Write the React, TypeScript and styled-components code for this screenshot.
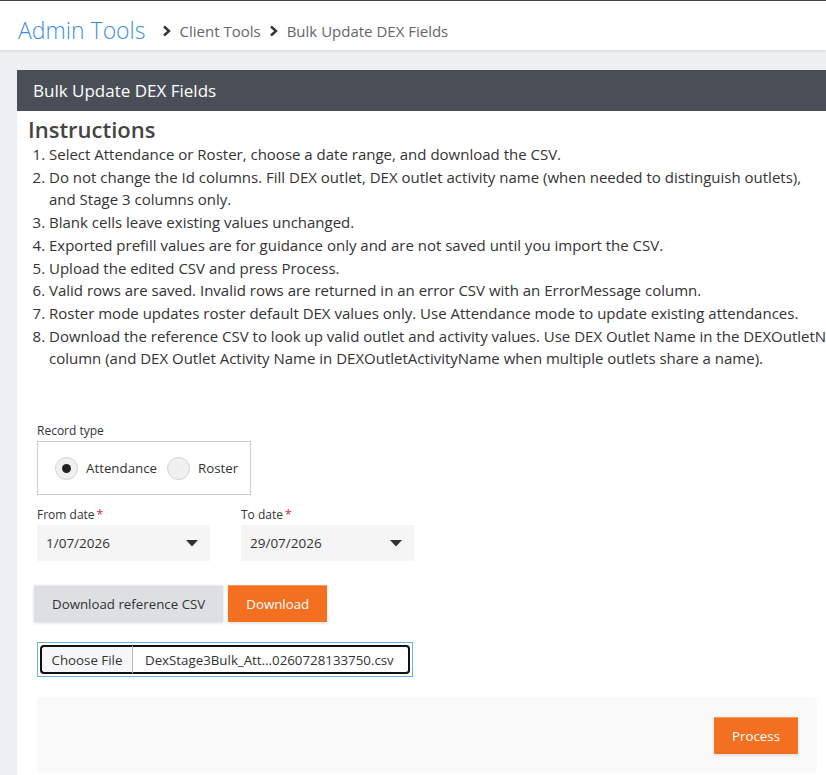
import React, { useState } from "react";
import styled, { createGlobalStyle } from "styled-components";

const GlobalStyle = createGlobalStyle`
    html, body {
        margin: 0;
        padding: 0;
        background-color: #eff0f4;
        overflow: hidden;
        font-family: "Open Sans", "Noto Sans", sans-serif;
        color: #333333;
    }
`;

// "\n" marks a hard break inside a step
const instructions: string[] = [
    "Select Attendance or Roster, choose a date range, and download the CSV.",
    "Do not change the Id columns. Fill DEX outlet, DEX outlet activity name (when needed to distinguish outlets),\nand Stage 3 columns only.",
    "Blank cells leave existing values unchanged.",
    "Exported prefill values are for guidance only and are not saved until you import the CSV.",
    "Upload the edited CSV and press Process.",
    "Valid rows are saved. Invalid rows are returned in an error CSV with an ErrorMessage column.",
    "Roster mode updates roster default DEX values only. Use Attendance mode to update existing attendances.",
    "Download the reference CSV to look up valid outlet and activity values. Use DEX Outlet Name in the DEXOutletName column (and DEX Outlet Activity Name in DEXOutletActivityName when multiple outlets share a name).",
];

const Chevron = () => (
    <svg width="10" height="12" viewBox="0 0 10 12">
        <path d="M2 1.5 L7 6 L2 10.5" fill="none" stroke="#333" strokeWidth="2.4" />
    </svg>
);

const Caret = () => (
    <svg width="12" height="7" viewBox="0 0 12 7">
        <path d="M0 0 H12 L6 6.5 Z" fill="#333" />
    </svg>
);

const App: React.FC = () => {
    const [recordType, setRecordType] = useState<"attendance" | "roster">("attendance");

    return (
        <>
            <GlobalStyle />
            <TopBar>
                <AppTitle>Admin Tools</AppTitle>
                <Crumbs>
                    <Chevron />
                    <Crumb>Client Tools</Crumb>
                    <Chevron />
                    <Crumb>Bulk Update DEX Fields</Crumb>
                </Crumbs>
            </TopBar>

            <Page>
                <Panel>
                    <PanelHeader>Bulk Update DEX Fields</PanelHeader>
                    <PanelBody>
                        <Heading>Instructions</Heading>
                        <Steps>
                            {instructions.map((text) => (
                                <li key={text}>{text}</li>
                            ))}
                        </Steps>

                        <Form>
                            <Field>
                                <Label>Record type</Label>
                                <RadioBox>
                                    <RadioOption onClick={() => setRecordType("attendance")}>
                                        <RadioDot checked={recordType === "attendance"} />
                                        Attendance
                                    </RadioOption>
                                    <RadioOption onClick={() => setRecordType("roster")}>
                                        <RadioDot checked={recordType === "roster"} />
                                        Roster
                                    </RadioOption>
                                </RadioBox>
                            </Field>

                            <DateRow>
                                <Field>
                                    <Label>
                                        From date<Required>*</Required>
                                    </Label>
                                    <DateSelect>
                                        <span>1/07/2026</span>
                                        <Caret />
                                    </DateSelect>
                                </Field>
                                <Field>
                                    <Label>
                                        To date<Required>*</Required>
                                    </Label>
                                    <DateSelect>
                                        <span>29/07/2026</span>
                                        <Caret />
                                    </DateSelect>
                                </Field>
                            </DateRow>

                            <ButtonRow>
                                <ActionButton>Download reference CSV</ActionButton>
                                <ActionButton primary>Download</ActionButton>
                            </ButtonRow>

                            <FileInput>
                                <FileButton>Choose File</FileButton>
                                <FileName>DexStage3Bulk_Att...0260728133750.csv</FileName>
                            </FileInput>

                            <Footer>
                                <ActionButton primary>Process</ActionButton>
                            </Footer>
                        </Form>
                    </PanelBody>
                </Panel>
            </Page>
        </>
    );
};

export default App;

// styles
const TopBar = styled.header`
    height: 50px;
    box-sizing: border-box;
    background-color: #ffffff;
    border-top: 1px solid #444444;
    box-shadow: 0 1px 3px rgba(0, 0, 0, 0.12);
    display: flex;
    align-items: center;
    padding: 9px 0 0 18px;
    position: relative;
`;

const AppTitle = styled.div`
    font-size: 23px;
    font-weight: 300;
    color: #3f8fe0;
    margin-right: 16px;
`;

const Crumbs = styled.div`
    display: flex;
    align-items: center;
    gap: 8px;
    margin-top: 1px;
`;

const Crumb = styled.span`
    font-size: 15px;
    color: #666666;
`;

const Page = styled.main`
    padding: 20px 0 0 17px;
`;

const Panel = styled.section`
    width: 880px;
    background-color: #ffffff;
`;

const PanelHeader = styled.div`
    height: 41px;
    background-color: #4a4f57;
    color: #ffffff;
    font-size: 17px;
    display: flex;
    align-items: center;
    padding-left: 16px;
`;

const PanelBody = styled.div`
    padding: 5px 0 2px 11px;
`;

const Heading = styled.h2`
    margin: 0;
    font-size: 22px;
    font-weight: 600;
    color: #444444;
    line-height: 27px;
`;

const Steps = styled.ol`
    margin: 0;
    padding-left: 21px;
    width: 820px;
    font-size: 15px;
    line-height: 22.7px;
    color: #333333;
    white-space: pre-line;
`;

const Form = styled.div`
    display: flex;
    flex-direction: column;
    padding: 53px 0 0 9px;
`;

const Field = styled.div`
    display: flex;
    flex-direction: column;
`;

const Label = styled.label`
    font-size: 12px;
    color: #333333;
    line-height: 16px;
    margin-bottom: 2px;
`;

const Required = styled.span`
    color: #e02020;
    margin-left: 2px;
`;

const RadioBox = styled.div`
    width: 214px;
    height: 54px;
    border: 1px solid #cccccc;
    display: flex;
    align-items: center;
    padding-left: 17px;
    gap: 10px;
    box-sizing: border-box;
`;

const RadioOption = styled.div`
    display: flex;
    align-items: center;
    gap: 8px;
    font-size: 13.3px;
    color: #333333;
    cursor: pointer;
`;

const RadioDot = styled.span<{ checked?: boolean }>`
    width: 23px;
    height: 23px;
    border-radius: 50%;
    border: 1px solid #d2d2d2;
    background-color: #f0f0f0;
    box-sizing: border-box;
    display: flex;
    align-items: center;
    justify-content: center;

    &::after {
        content: "";
        width: 9px;
        height: 9px;
        border-radius: 50%;
        background-color: #222222;
        display: ${(props) => (props.checked ? "block" : "none")};
    }
`;

const DateRow = styled.div`
    display: flex;
    gap: 31px;
    margin-top: 12px;
`;

const DateSelect = styled.div`
    width: 173px;
    height: 36px;
    background-color: #f5f5f5;
    box-sizing: border-box;
    display: flex;
    align-items: center;
    justify-content: space-between;
    padding: 0 12px 0 9px;
    font-size: 13.5px;
    color: #333333;
`;

const ButtonRow = styled.div`
    display: flex;
    gap: 5px;
    margin: 24px 0 0 -3px;
`;

const ActionButton = styled.button<{ primary?: boolean }>`
    height: 37px;
    padding: 0 18px;
    border: none;
    border-top: 1px solid ${(props) => (props.primary ? "#f69a5c" : "#e8eaec")};
    background-color: ${(props) => (props.primary ? "#f37021" : "#dde0e3")};
    color: ${(props) => (props.primary ? "#ffffff" : "#333333")};
    font-family: "Open Sans", "Noto Sans", sans-serif;
    font-size: 13.3px;
    white-space: nowrap;
    box-shadow: 0 1px 3px rgba(0, 0, 0, 0.15);
    cursor: pointer;
`;

const FileInput = styled.div`
    margin-top: 20px;
    width: 376px;
    height: 35px;
    border: 1px solid #6aaee8;
    padding: 2px;
    box-sizing: border-box;
    display: flex;
    white-space: nowrap;

    & > * {
        height: 100%;
    }
`;

const FileButton = styled.div`
    width: 93px;
    display: flex;
    align-items: center;
    justify-content: center;
    background-color: #f6f7f9;
    border: 2px solid #111111;
    border-right: 1px solid #bbbbbb;
    border-radius: 4px 0 0 4px;
    box-sizing: border-box;
    font-size: 13.3px;
`;

const FileName = styled.div`
    flex: 1;
    display: flex;
    align-items: center;
    padding-left: 12px;
    border: 2px solid #111111;
    border-left: none;
    border-radius: 0 4px 4px 0;
    box-sizing: border-box;
    font-size: 13.3px;
    overflow: hidden;
`;

const Footer = styled.div`
    margin-top: 20px;
    width: 780px;
    height: 76px;
    background-color: #f9f9f9;
    border-radius: 4px;
    display: flex;
    align-items: center;
    justify-content: flex-end;
    padding-right: 19px;
    box-sizing: border-box;
`;
